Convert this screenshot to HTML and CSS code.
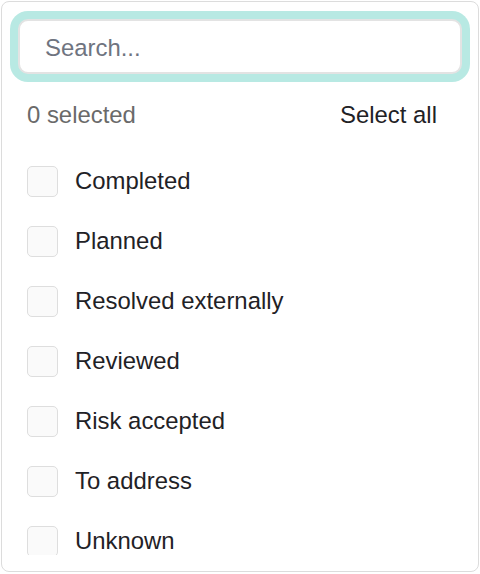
FILE: index.html
```html
<!DOCTYPE html>
<html>
<head>
<meta charset="utf-8">
<link rel="stylesheet" href="styles.css">
</head>
<body>
<div class="panel">
  <div class="search-wrap">
    <input class="search" type="text" placeholder="Search...">
  </div>
  <div class="header">
    <span class="count">0 selected</span>
    <span class="select-all">Select all</span>
  </div>
  <div class="list">
    <label class="row"><span class="box"></span><span class="label">Completed</span></label>
    <label class="row"><span class="box"></span><span class="label">Planned</span></label>
    <label class="row"><span class="box"></span><span class="label">Resolved externally</span></label>
    <label class="row"><span class="box"></span><span class="label">Reviewed</span></label>
    <label class="row"><span class="box"></span><span class="label">Risk accepted</span></label>
    <label class="row"><span class="box"></span><span class="label">To address</span></label>
    <label class="row"><span class="box"></span><span class="label">Unknown</span></label>
  </div>
</div>
</body>
</html>
```

FILE: styles.css
```css
html, body {
  margin: 0;
  padding: 0;
  background: #ffffff;
}
body {
  font-family: "Liberation Sans", Arial, sans-serif;
  font-size: 23.9px;
  color: #1f2226;
}
.panel {
  box-sizing: border-box;
  margin: 1px 1px 0 1px;
  width: 478px;
  height: 571px;
  border: 1px solid #dcdcdc;
  border-radius: 8px;
  padding: 17px 16px 15px 16px;
  display: flex;
  flex-direction: column;
  background: #fff;
}
.search-wrap {
  display: flex;
}
.search {
  box-sizing: border-box;
  flex: 1;
  height: 55px;
  border: 2px solid #e3e3e3;
  border-radius: 10px;
  box-shadow: 0 0 0 8px #b8e9e3;
  padding: 2px 25px 0 25px;
  font-family: "Liberation Sans", Arial, sans-serif;
  font-size: 23.9px;
  color: #1f2226;
  outline: none;
  background: #fff;
}
.search::placeholder {
  color: #6f7480;
}
.header {
  display: flex;
  justify-content: space-between;
  align-items: center;
  height: 42px;
  margin-top: 20px;
  padding: 0 25px 0 9px;
}
.count {
  color: #6a6a6a;
}
.select-all {
  color: #1f2226;
}
.list {
  margin-top: 15px;
  height: 404px;
  overflow: hidden;
  padding: 0 9px;
}
.row {
  display: flex;
  align-items: center;
  height: 60px;
}
.box {
  box-sizing: border-box;
  width: 31px;
  height: 31px;
  border: 1.5px solid #dedede;
  border-radius: 5px;
  background: #fafafa;
  flex: none;
}
.label {
  margin-left: 17px;
}
```
